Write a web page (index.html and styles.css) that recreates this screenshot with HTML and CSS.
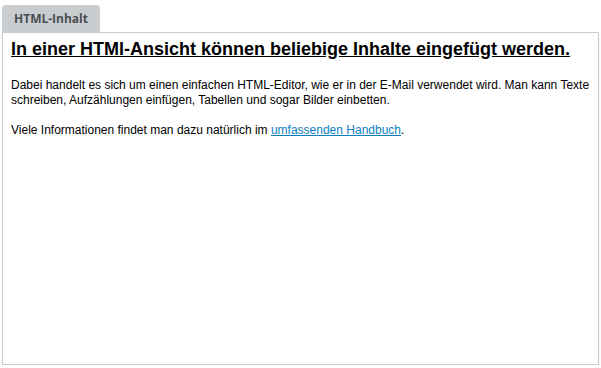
FILE: index.html
```html
<!DOCTYPE html>
<html lang="de">
<head>
    <meta charset="UTF-8">
    <meta name="viewport" content="width=device-width, initial-scale=1.0">
    <title>HTML-Inhalt</title>
    <link rel="stylesheet" href="styles.css">
</head>
<body>
    <div class="widget">
        <div class="tabs">
            <div class="tab">HTML-Inhalt</div>
        </div>
        <div class="panel">
            <h1>In einer HTMl-Ansicht können beliebige Inhalte eingefügt werden.</h1>
            <p>Dabei handelt es sich um einen einfachen HTML-Editor, wie er in der E-Mail verwendet wird. Man kann Texte schreiben, Aufzählungen einfügen, Tabellen und sogar Bilder einbetten.</p>
            <p>Viele Informationen findet man dazu natürlich im <a href="#">umfassenden Handbuch</a>.</p>
        </div>
    </div>
</body>
</html>
```

FILE: styles.css
```css
body {
    margin: 0;
    background-color: white;
    font-family: "Liberation Sans", Arial, sans-serif;
}

.widget {
    padding: 5px 2px 0 2px;
}

.tabs {
    display: flex;
}

/* reiter oben links */
.tab {
    background-color: #c9cdcf;
    color: #4a4d4f;
    font-family: "Open Sans", sans-serif;
    font-weight: bold;
    font-size: 12px;
    height: 27px;
    line-height: 27px;
    padding: 0 12px;
    border-radius: 4px 4px 0 0;
}

.panel {
    box-sizing: border-box;
    border: 1px solid #c9cdcd;
    height: 333px;
    padding: 6px 8px;
    box-shadow: 0 2px 3px rgba(0, 0, 0, 0.06);
}

.panel h1 {
    font-size: 18px;
    font-weight: bold;
    text-decoration: underline;
    color: black;
    margin: 0 0 18px 0;
}

.panel p {
    font-size: 12px;
    line-height: 15px;
    color: black;
    margin: 0 0 15px 0;
}

.panel a {
    color: #0b7fc1;
}
```
